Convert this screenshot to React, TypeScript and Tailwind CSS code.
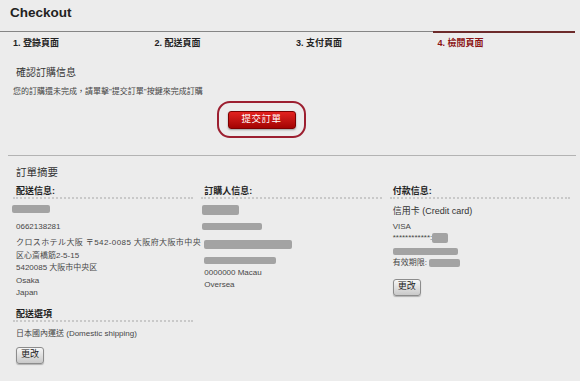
const Redacted = ({ className }: { className: string }) => (
    <div className={`bg-[#a3a3a3] rounded-[2px] blur-[0.6px] ${className}`} />
);

const ChangeButton = ({ className = "" }: { className?: string }) => (
    <button
        className={`w-[28px] h-[17px] flex items-center justify-center text-[9px] text-[#222] rounded-[3px] border border-[#8c8c8c] bg-gradient-to-b from-[#f7f7f7] to-[#c9c9c9] shadow-[0_1px_1px_rgba(0,0,0,0.25)] ${className}`}
    >
        更改
    </button>
);

const ColumnHeading = ({ children }: { children: string }) => (
    <div className="px-[3px] text-[9px] leading-[12px] font-bold text-[#1f1f1f] border-b-2 border-dotted border-[#c9c9c9]">
        {children}
    </div>
);

const steps = ["1. 登錄頁面", "2. 配送頁面", "3. 支付頁面", "4. 檢閱頁面"];

export default function App() {
    return (
        <div className="w-[580px] h-[381px] overflow-hidden bg-[#ececec] text-[#474747] font-['Liberation_Sans','Noto_Sans_CJK_TC',sans-serif]">
            <h1 className="pl-[10px] pt-[4px] text-[13.5px] leading-[18px] font-bold text-[#222]">
                Checkout
            </h1>

            {/* progress line */}
            <div className="mt-[9px] flex items-start pr-[5px]">
                <div className="flex-1 h-px bg-[#858585]" />
                <div className="w-[142px] h-[2px] bg-[#6d2b2b]" />
            </div>

            <div className="mt-[4px] pl-[13px] w-[579px] grid grid-cols-4">
                {steps.map((step, i) => (
                    <div
                        key={step}
                        className={`text-[9px] leading-[12px] font-bold ${
                            i === 3 ? "text-[#8b1313]" : "text-[#222]"
                        }`}
                    >
                        {step}
                    </div>
                ))}
            </div>

            <div className="mt-[17px] pl-[16px] text-[10px] leading-[14px] text-[#333]">
                確認訂購信息
            </div>
            <div className="mt-[6px] pl-[13px] text-[8px] leading-[12px] text-[#444]">
                您的訂購還未完成，請單擊"提交訂單"按鍵來完成訂購
            </div>

            {/* submit button with highlight */}
            <div className="mt-[3px] ml-[217px] w-[89px] h-[37px] flex items-center justify-center rounded-[13px] border-2 border-[#9c1f30]">
                <button className="w-[68px] h-[18px] flex items-center justify-center rounded-[3px] border border-[#7c0000] bg-gradient-to-b from-[#e3221f] to-[#a30303] text-white text-[9.5px] tracking-[0.5px] shadow-[0_1px_2px_rgba(0,0,0,0.35)]">
                    提交訂單
                </button>
            </div>

            <div className="mt-[17px] ml-[8px] mr-[4px] border-t border-[#b3b3b3]" />

            <div className="mt-[9px] pl-[16px] text-[10.5px] leading-[14px] text-[#333]">
                訂單摘要
            </div>

            <div className="mt-[6px] ml-[13px] w-[557px] grid grid-cols-3 gap-x-[8px] text-[8px]">
                {/* shipping */}
                <div>
                    <ColumnHeading>配送信息:</ColumnHeading>
                    <Redacted className="mt-[6px] ml-[-1px] w-[38px] h-[8px]" />
                    <div className="mt-[8px] px-[3px] leading-[12.5px]">0662138281</div>
                    <div className="mt-[3.5px] px-[3px] leading-[12.5px]">
                        <div className="whitespace-nowrap tracking-[0.4px]">
                            クロスホテル大阪 〒542-0085 大阪府大阪市中央
                        </div>
                        <div>区心斎橋筋2-5-15</div>
                        <div>5420085 大阪市中央区</div>
                        <div>Osaka</div>
                        <div>Japan</div>
                    </div>
                    <div className="mt-[8.5px]">
                        <ColumnHeading>配送選項</ColumnHeading>
                    </div>
                    <div className="mt-[6px] px-[3px] leading-[12.5px]">
                        日本國內運送 (Domestic shipping)
                    </div>
                    <ChangeButton className="mt-[6px] ml-[3px]" />
                </div>

                {/* buyer */}
                <div>
                    <ColumnHeading>訂購人信息:</ColumnHeading>
                    <Redacted className="mt-[6px] ml-[1px] w-[37px] h-[10px]" />
                    <Redacted className="mt-[8px] ml-[1px] w-[60px] h-[7px]" />
                    <Redacted className="mt-[10px] ml-[3px] w-[88px] h-[9px]" />
                    <Redacted className="mt-[8px] ml-[3px] w-[72px] h-[7px]" />
                    <div className="mt-[3px] px-[3px] leading-[12px]">
                        <div>0000000 Macau</div>
                        <div>Oversea</div>
                    </div>
                </div>

                {/* payment */}
                <div>
                    <ColumnHeading>付款信息:</ColumnHeading>
                    <div className="mt-[6px] px-[3px] text-[9px] leading-[12px] text-[#333]">
                        信用卡 (Credit card)
                    </div>
                    <div className="mt-[4px] px-[3px] leading-[11px]">
                        <div>VISA</div>
                        <div className="flex items-center">
                            <span>************:</span>
                            <Redacted className="w-[16px] h-[10px]" />
                        </div>
                    </div>
                    <Redacted className="mt-[4.5px] ml-[3px] w-[65px] h-[7px]" />
                    <div className="mt-[2px] px-[3px] leading-[12px] flex items-center">
                        <span>有效期限:&nbsp;</span>
                        <Redacted className="w-[31px] h-[8px]" />
                    </div>
                    <ChangeButton className="mt-[10px] ml-[3px]" />
                </div>
            </div>
        </div>
    );
}
